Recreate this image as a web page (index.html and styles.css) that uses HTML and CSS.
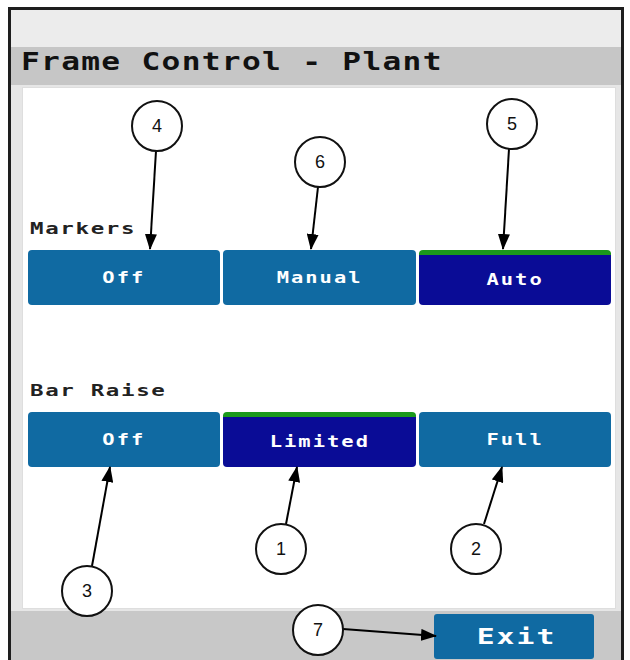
FILE: index.html
```html
<!DOCTYPE html>
<html lang="en">
<head>
    <meta charset="UTF-8">
    <meta name="viewport" content="width=device-width, initial-scale=1.0">
    <title>Frame Control - Plant</title>
    <link rel="stylesheet" href="styles.css">
</head>
<body>
    <div class="screen">
        <div class="top-strip"></div>
        <div class="title-bar">
            <h1><span class="wide">Frame Control - Plant</span></h1>
        </div>

        <div class="panel">
            <div class="group group-markers">
                <div class="group-label"><span class="wide">Markers</span></div>
                <div class="seg">
                    <button class="seg-btn"><span class="wide">Off</span></button>
                    <button class="seg-btn"><span class="wide">Manual</span></button>
                    <button class="seg-btn active"><span class="wide">Auto</span></button>
                </div>
            </div>

            <div class="group group-bar">
                <div class="group-label"><span class="wide">Bar Raise</span></div>
                <div class="seg">
                    <button class="seg-btn"><span class="wide">Off</span></button>
                    <button class="seg-btn active"><span class="wide">Limited</span></button>
                    <button class="seg-btn"><span class="wide">Full</span></button>
                </div>
            </div>
        </div>

        <div class="bottom-bar">
            <button class="exit-btn"><span class="wide">Exit</span></button>
        </div>
    </div>

    <!-- numbered callouts drawn over the screen -->
    <svg class="callouts" width="630" height="660" viewBox="0 0 630 660">
        <defs>
            <marker id="head" markerWidth="16" markerHeight="12" refX="15" refY="6" orient="auto" markerUnits="userSpaceOnUse">
                <path d="M0,0 L16,6 L0,12 Z" fill="#000"/>
            </marker>
        </defs>
        <g class="lines">
            <line x1="156" y1="151" x2="150" y2="249" marker-end="url(#head)"/>
            <line x1="318" y1="187" x2="311" y2="249" marker-end="url(#head)"/>
            <line x1="509" y1="149" x2="503" y2="249" marker-end="url(#head)"/>
            <line x1="92" y1="566" x2="110" y2="467" marker-end="url(#head)"/>
            <line x1="286" y1="524" x2="297" y2="467" marker-end="url(#head)"/>
            <line x1="484" y1="524" x2="502" y2="467" marker-end="url(#head)"/>
            <line x1="343" y1="629" x2="436" y2="636" marker-end="url(#head)"/>
        </g>
        <g class="bubbles">
            <circle cx="157" cy="126" r="25"/><text x="157" y="132">4</text>
            <circle cx="320" cy="162" r="25"/><text x="320" y="168">6</text>
            <circle cx="512" cy="124" r="25"/><text x="512" y="130">5</text>
            <circle cx="87" cy="591" r="25"/><text x="87" y="597">3</text>
            <circle cx="281" cy="549" r="25"/><text x="281" y="555">1</text>
            <circle cx="476" cy="549" r="25"/><text x="476" y="555">2</text>
            <circle cx="318" cy="630" r="25"/><text x="318" y="636">7</text>
        </g>
    </svg>
</body>
</html>
```

FILE: styles.css
```css
body {
    margin: 0;
    background-color: #fff;
    font-family: "DejaVu Sans Mono", monospace;
    position: relative;
    width: 630px;
    height: 660px;
    overflow: hidden;
}
.screen {
    margin: 7px 0 0 8px;
    width: 610px;
    height: 653px;
    border: 3px solid #1e1e1e;
    border-bottom: none;
    background: #e6e6e6;
    display: flex;
    flex-direction: column;
}
/* the panel font is drawn wider than it is tall */
.wide {
    display: inline-block;
    transform: scaleX(1.4);
    transform-origin: center;
    white-space: pre;
}
.top-strip {
    height: 37px;
    background: #ececec;
}
.title-bar {
    height: 38px;
    background: #c6c6c6;
    padding-left: 10px;
}
.title-bar h1 {
    margin: 0;
    font-size: 24px;
    line-height: 30px;
    font-weight: bold;
    letter-spacing: 1px;
    color: #111;
}
.title-bar .wide {
    transform: scaleX(1.3);
}
.title-bar .wide,
.group-label .wide {
    transform-origin: left;
}
.panel {
    margin: 2px 5px 0 11px;
    height: 520px;
    background: #fff;
    border: 1px solid #dedede;
    padding: 0 4px 0 5px;
}
.group-markers {
    margin-top: 131px;
}
.group-bar {
    margin-top: 76px;
}
.group-label {
    font-size: 16px;
    font-weight: bold;
    letter-spacing: 1.2px;
    color: #222;
    line-height: 20px;
    padding-left: 2px;
    margin-bottom: 11px;
}
.seg {
    display: flex;
    gap: 3px;
}
.seg-btn {
    flex: 1;
    height: 55px;
    border: none;
    border-radius: 4px;
    background: #106aa2;
    color: #fff;
    font-family: "DejaVu Sans Mono", monospace;
    font-size: 15px;
    font-weight: bold;
    letter-spacing: 1.5px;
    padding: 0;
}
.seg-btn .wide {
    transform: scaleX(1.36);
}
.seg-btn.active {
    background: #0a0c96;
    border-top: 5px solid #1b9a1b;
}
.bottom-bar {
    flex: 1;
    margin-top: 2px;
    background: #c8c8c8;
    display: flex;
    justify-content: flex-end;
    align-items: flex-start;
    padding: 3px 27px 0 0;
}
.exit-btn {
    width: 160px;
    height: 45px;
    border: none;
    border-radius: 3px;
    background: #106aa2;
    color: #fff;
    font-family: "DejaVu Sans Mono", monospace;
    font-size: 22px;
    font-weight: bold;
    letter-spacing: 1.5px;
    padding: 0 0 0 4px;
}
.exit-btn .wide {
    transform: scaleX(1.35);
}
.callouts {
    position: absolute;
    top: 0;
    left: 0;
}
.callouts line {
    stroke: #000;
    stroke-width: 2;
}
.callouts circle {
    fill: #fff;
    stroke: #111;
    stroke-width: 2;
}
.callouts text {
    font-family: "Liberation Sans", Arial, sans-serif;
    font-size: 18px;
    text-anchor: middle;
    fill: #111;
}
```
